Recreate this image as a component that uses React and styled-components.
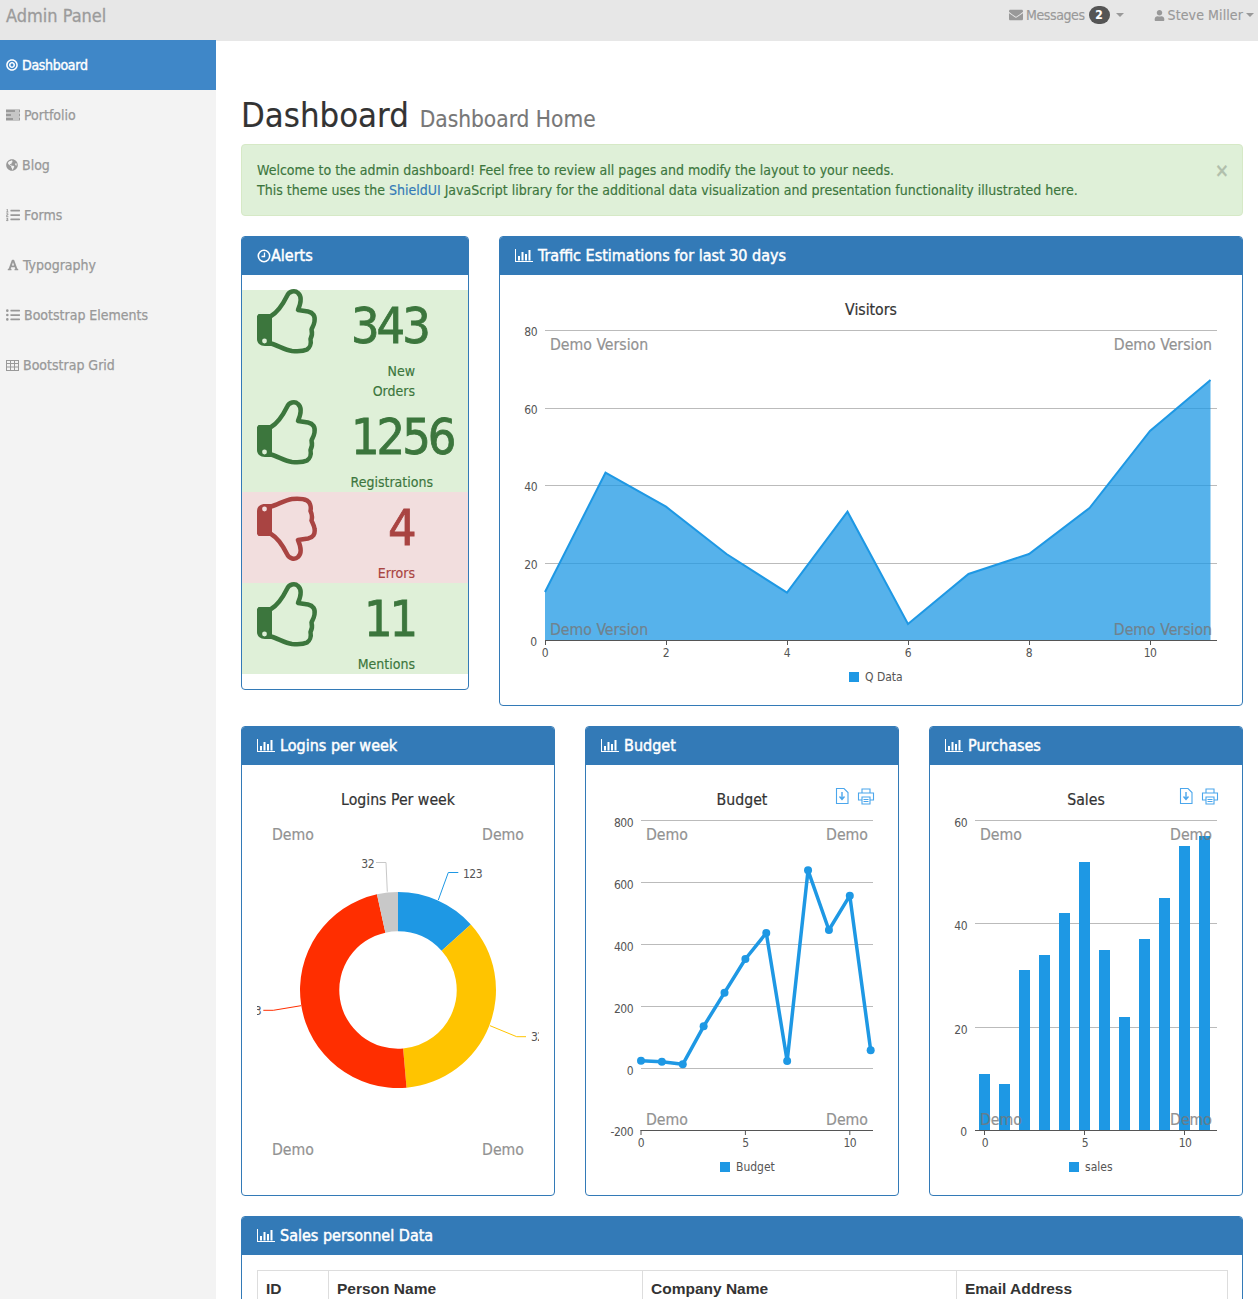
import React from "react";
import styled, { createGlobalStyle } from "styled-components";
import { FaEnvelope, FaUser, FaBullseye, FaGlobeAmericas, FaListOl, FaListUl, FaFont } from "react-icons/fa";

const UI = `"DejaVu Sans Condensed", "DejaVu Sans", sans-serif`;

const Global = createGlobalStyle`
  html, body { margin: 0; padding: 0; background: #fff; }
  body { font-family: ${UI}; font-stretch: condensed; font-size: 14px; line-height: 20px; color: #333; -webkit-text-stroke: .15px; }
  * { box-sizing: border-box; }
`;

const Page = styled.div`height: 1299px; overflow: hidden; display: flex; flex-direction: column;`;
const TopBar = styled.header`
  height: 41px; flex: none; background: #e7e7e7; display: flex; align-items: flex-start;
  justify-content: space-between; padding: 5px 4px 0 6px; color: #999;
`;
const Brand = styled.div`font-size: 18px; line-height: 22px; color: #9b9b9b; -webkit-text-stroke: .3px;`;
const TopRight = styled.div`display: flex; align-items: center; height: 20px;`;
const TopLink = styled.div`display: flex; align-items: center; gap: 3px; margin-left: ${p => p.$ml || 0}px;`;
const TopText = styled.span`letter-spacing: ${p => p.$ls}px;`;
const Badge = styled.span`
  display: inline-flex; align-items: center; justify-content: center; width: 21px; height: 18px;
  margin-left: 1px; border-radius: 10px; background: #555; color: #fff; font-size: 12px; font-weight: bold;
`;
const Caret = styled.span`
  display: inline-block; width: 0; height: 0; margin-left: ${p => p.$ml || 0}px;
  border-top: 4px solid #999; border-left: 4px solid transparent; border-right: 4px solid transparent;
`;
const Layout = styled.div`flex: 1; display: flex; min-height: 0;`;
const Sidebar = styled.nav`width: 216px; flex: none; margin-top: -1px; background: #f3f3f3; position: relative;`;
const SideItem = styled.a`
  display: flex; align-items: center; gap: 4px; height: 50px; padding-left: ${p => p.$pl || 6}px;
  color: ${p => (p.$active ? "#fff" : "#999")}; background: ${p => (p.$active ? "#3f87c8" : "transparent")};
  -webkit-text-stroke: ${p => (p.$active ? ".4px" : ".25px")};
  letter-spacing: ${p => (p.$active ? "-.3px" : "0")};
  font-size: 14px;
  svg { flex: none; }
`;
const Main = styled.main`flex: 1; min-width: 0; padding: 0 15px 0 25px;`;
const PageHeader = styled.h1`
  margin: 52px 0 6px; height: 45px; font-size: 34.400px; font-weight: normal; line-height: 45px; color: #333;
  small { font-size: 22.500px; color: #777; margin-left: 1px; }
`;
const Alert = styled.div`
  position: relative; height: 72px; padding: 15px; background: #dff0d8; border: 1px solid #d6e9c6;
  border-radius: 4px; color: #3c763d; margin-bottom: 20px;
  a { color: #337ab7; }
`;
const Close = styled.span`
  position: absolute; right: 13px; top: 15px; font-size: 19px; font-weight: bold; color: #000; opacity: .2;
`;
const Row = styled.div`display: grid; grid-template-columns: ${p => p.$cols}; gap: 30px; margin-bottom: 20px; align-items: start;`;
const Panel = styled.section`border: 1px solid #337ab7; border-radius: 4px; background: #fff; overflow: hidden;`;
const PanelHeading = styled.h3`
  margin: 0; height: 38px; background: #337ab7; color: #fff; padding: 0 15px; font-size: 16px; line-height: 20px;
  font-weight: normal; -webkit-text-stroke: .45px; display: flex; align-items: center; gap: ${p => p.$gap ?? 5}px;
`;
const PanelBody = styled.div`padding: 15px 0;`;
const ChartBody = styled.div`padding: 15px;`;
const AlertRowBox = styled.div`background: ${p => (p.$bad ? "#f2dede" : "#dff0d8")}; color: ${p => (p.$bad ? "#a94442" : "#3c763d")};`;
const AlertTop = styled.div`display: flex; height: 71px; padding-left: 15px;`;
const Thumb = styled.svg`flex: none; margin-top: ${p => (p.$down ? 4 : -1)}px; overflow: visible;`;
const BigNum = styled.div`
  font-size: 50px; line-height: 71px; margin: 1px 0 0 ${p => p.$ml}px; letter-spacing: -3px;
  white-space: nowrap; -webkit-text-stroke: .8px;
`;
const AlertLabel = styled.div`text-align: right; padding-right: ${p => p.$pr}px;`;
const HeadLabel = styled.span``;
const Table = styled.table`
  width: 100%; border-collapse: collapse; table-layout: fixed; font-family: "Liberation Sans", Arial, sans-serif;
  -webkit-text-stroke: 0;
  th { border: 1px solid #ddd; border-bottom-width: 2px; padding: 8px; text-align: left; font-size: 15.500px; line-height: 20px; color: #333; font-weight: bold; }
`;
const ChartSvg = styled.svg`display: block;`;
const ChartTitle = styled.text`font-size: 15.700px; fill: #333; stroke: #333; stroke-width: .2px; text-anchor: middle;`;
const Watermark = styled.text`font-size: 15.700px; fill: #777; stroke: #777; stroke-width: .2px; opacity: .8; text-anchor: ${p => p.$anchor || "start"};`;
const Tick = styled.text`font-size: 12px; fill: #555; text-anchor: ${p => p.$anchor || "middle"}; letter-spacing: ${p => (p.$tight ? "-.5px" : "0")};`;
const GridLine = styled.line`stroke: #bbb; stroke-width: 1;`;
const AxisLine = styled.line`stroke: #555; stroke-width: 1;`;

const BLUE = "#1e98e4";

function ThumbIcon({ down, color }) {
  return (
    <Thumb $down={down} width="60" height="65" viewBox="0 0 60 65">
      <g transform={down ? "translate(0 65) scale(1 -1)" : undefined}>
        <path d="M1.500 25H15V57H8C3 57 0 54 0 50V27Z" fill={color} />
        <circle cx="7.500" cy="52" r="2.400" fill={down ? "#f2dede" : "#dff0d8"} />
        <path
          d="M14 27C21 23 26 15 30 7C32 2 38 1 41 4C44.500 7 44 14 41 21L51 22.500C56 23.500 58.500 27 57.500 32.500C57 36 55.500 38 54.500 40.500C55.500 44 55 47 53.500 50C54.500 55 52.500 59 50 60.500C46 62.500 41 62.500 35 62C28 61 21 56.500 14 54.500"
          fill="none" stroke={color} strokeWidth="4.500" strokeLinecap="round" strokeLinejoin="round" />
      </g>
    </Thumb>
  );
}

function BarIcon() {
  return (
    <svg width="18" height="14" viewBox="0 0 18 14" fill="#fff">
      <rect x="0" y="0" width="1" height="13" />
      <rect x="0" y="12" width="18" height="1" />
      <rect x="3" y="7" width="2" height="4.500" />
      <rect x="6.500" y="3" width="2" height="8.500" />
      <rect x="10" y="5" width="2" height="6.500" />
      <rect x="13.500" y="1" width="2" height="10.500" />
    </svg>
  );
}
const ClockIcon = () => (
  <svg width="14" height="14" viewBox="0 0 14 14" fill="none" stroke="#fff" strokeWidth="1.600">
    <circle cx="7" cy="7" r="5.700" /><path d="M7.500 3.500V7.500H4.500" strokeWidth="1.300" />
  </svg>
);
const TasksIcon = () => (
  <svg width="14" height="12" viewBox="0 0 14 12" fill="#999">
    <rect y="0.500" width="14" height="3" /><rect y="4.500" width="14" height="3" /><rect y="8.500" width="14" height="3" />
    <rect x="9" y="1.500" width="4" height="1" fill="#f3f3f3" /><rect x="5" y="5.500" width="8" height="1" fill="#f3f3f3" /><rect x="7" y="9.500" width="6" height="1" fill="#f3f3f3" />
  </svg>
);
const TableIcon = () => (
  <svg width="13" height="11" viewBox="0 0 13 11" fill="none" stroke="#999" strokeWidth="1">
    <rect x=".5" y=".5" width="12" height="10" /><path d="M.5 3.500H12.500M.5 7H12.500M4.500 .5V10.500M8.500 .5V10.500" />
  </svg>
);
const ExportIcons = ({ x }) => (
  <g fill="none" stroke="#4ba6ec" strokeWidth="1.100">
    <path d={`M${x + .5} 788.500H${x + 8}L${x + 12} 792.500V803.500H${x + .5}Z`} />
    <path d={`M${x + 6} 792V799M${x + 3.500} 796.500L${x + 6} 799.500L${x + 8.500} 796.500`} strokeWidth="1.400" />
    <path d={`M${x + 26} 793V789H${x + 34}V793M${x + 26} 800H${x + 22.500}V793H${x + 37.500}V800H${x + 34}M${x + 26} 797H${x + 34}V804H${x + 26}Z`} />
    <path d={`M${x + 27.500} 799.500H${x + 32.500}M${x + 27.500} 801.500H${x + 32.500}`} />
  </g>
);

const Legend = ({ x, y, label }) => (
  <>
    <rect x={x} y={y} width="10" height="10" fill={BLUE} />
    <Tick x={x + 16} y={y + 8.500} $anchor="start">{label}</Tick>
  </>
);

const Traffic = () => {
  const ys = [592, 472.700, 506.700, 554, 592.700, 511.700, 624, 574, 554, 508, 431, 380];
  const pts = ys.map((y, i) => `${545 + 60.500 * i},${y}`).join(" ");
  return (
    <ChartSvg width="712" height="400" viewBox="515 290 712 400">
      <ChartTitle x="871" y="315">Visitors</ChartTitle>
      {[[330.500, "80"], [408.500, "60"], [485.500, "40"], [563.500, "20"]].map(([y, l]) => (
        <g key={l}><GridLine x1="545" x2="1217" y1={y} y2={y} /><Tick x="537" y={y + 5} $anchor="end" $tight>{l}</Tick></g>
      ))}
      <Tick x="537" y="646" $anchor="end">0</Tick>
      <polygon points={`545,640 ${pts} 1210.500,640`} fill={BLUE} fillOpacity=".75" />
      <polyline points={pts} fill="none" stroke={BLUE} strokeWidth="2" />
      <AxisLine x1="545" x2="1217" y1="640.500" y2="640.500" />
      {[0, 2, 4, 6, 8, 10].map((t) => (
        <g key={t}>
          <AxisLine x1={545 + 60.500 * t + .5} x2={545 + 60.500 * t + .5} y1="640" y2="645" />
          <Tick x={545 + 60.500 * t} y="657" $tight>{t}</Tick>
        </g>
      ))}
      <Watermark x="550" y="350">Demo Version</Watermark>
      <Watermark x="1212" y="350" $anchor="end">Demo Version</Watermark>
      <Watermark x="550" y="635">Demo Version</Watermark>
      <Watermark x="1212" y="635" $anchor="end">Demo Version</Watermark>
      <Legend x={849} y={672} label="Q Data" />
    </ChartSvg>
  );
};

function arc(cx, cy, R, r, a0, a1) {
  const p = (rad, deg) => {
    const t = (deg - 90) * Math.PI / 180;
    return `${(cx + rad * Math.cos(t)).toFixed(2)} ${(cy + rad * Math.sin(t)).toFixed(2)}`;
  };
  const large = a1 - a0 > 180 ? 1 : 0;
  return `M${p(R, a0)}A${R} ${R} 0 ${large} 1 ${p(R, a1)}L${p(r, a1)}A${r} ${r} 0 ${large} 0 ${p(r, a0)}Z`;
}

const Donut = () => (
  <ChartSvg width="282" height="400" viewBox="257 780 282 400">
    <ChartTitle x="398" y="805">Logins Per week</ChartTitle>
    <Watermark x="272" y="840">Demo</Watermark>
    <Watermark x="524" y="840" $anchor="end">Demo</Watermark>
    <Watermark x="272" y="1155">Demo</Watermark>
    <Watermark x="524" y="1155" $anchor="end">Demo</Watermark>
    <path d={arc(398, 990, 98, 58.700, 0, 48)} fill={BLUE} />
    <path d={arc(398, 990, 98, 58.700, 48, 175)} fill="#ffc400" />
    <path d={arc(398, 990, 98, 58.700, 175, 347.600)} fill="#ff2e00" />
    <path d={arc(398, 990, 98, 58.700, 347.600, 360)} fill="#c8c8c8" />
    <g fill="none" strokeWidth="1">
      <path d="M438.300 900L448.300 872.500H458.300" stroke={BLUE} />
      <path d="M490 1025.700L516.700 1036.700H526" stroke="#ffc400" />
      <path d="M301 1005.700L273.300 1010.300H263.300" stroke="#ff2e00" />
      <path d="M387.300 891.700L386 862.500H376" stroke="#c8c8c8" />
    </g>
    <Tick x="463" y="878" $anchor="start" $tight>123</Tick>
    <Tick x="531" y="1041" $anchor="start" $tight>321</Tick>
    <Tick x="261" y="1015" $anchor="end" $tight>423</Tick>
    <Tick x="374" y="868" $anchor="end" $tight>32</Tick>
  </ChartSvg>
);

const Budget = () => {
  const zy = [1007, 1010, 1018, 904, 803, 702, 624, 1008, 436, 615, 512, 976];
  const pts = zy.map((z, i) => [641 + 20.880 * i, z / 3 + 725]);
  return (
    <ChartSvg width="282" height="400" viewBox="601 780 282 400">
      <ChartTitle x="742" y="805">Budget</ChartTitle>
      <ExportIcons x={836} />
      {[[820.500, "800"], [882.500, "600"], [944.500, "400"], [1006.500, "200"], [1068.500, "0"]].map(([y, l]) => (
        <g key={l}><GridLine x1="641" x2="873" y1={y} y2={y} /><Tick x="633" y={y + 6} $anchor="end" $tight>{l}</Tick></g>
      ))}
      <Tick x="633" y="1136" $anchor="end" $tight>-200</Tick>
      <AxisLine x1="640.500" x2="873" y1="1130.500" y2="1130.500" />
      {[0, 5, 10].map((t) => (
        <g key={t}>
          <AxisLine x1={641 + 20.880 * t} x2={641 + 20.880 * t} y1="1130" y2="1135" />
          <Tick x={641 + 20.880 * t} y="1147" $tight>{t}</Tick>
        </g>
      ))}
      <Watermark x="646" y="840">Demo</Watermark>
      <Watermark x="868" y="840" $anchor="end">Demo</Watermark>
      <Watermark x="646" y="1125">Demo</Watermark>
      <Watermark x="868" y="1125" $anchor="end">Demo</Watermark>
      <polyline points={pts.map((p) => p.join(",")).join(" ")} fill="none" stroke={BLUE} strokeWidth="3.500" strokeLinejoin="round" />
      {pts.map(([x, y]) => <circle key={x} cx={x} cy={y} r="4" fill={BLUE} />)}
      <Legend x={720} y={1162} label="Budget" />
    </ChartSvg>
  );
};

const Sales = () => {
  const tops = [1047, 1077, 735, 690, 564, 411, 675, 876, 642, 519, 363, 333];
  return (
    <ChartSvg width="282" height="400" viewBox="945 780 282 400">
      <ChartTitle x="1086" y="805">Sales</ChartTitle>
      <ExportIcons x={1180} />
      {[[820.500, "60"], [923.500, "40"], [1027.500, "20"]].map(([y, l]) => (
        <g key={l}><GridLine x1="975" x2="1217" y1={y} y2={y} /><Tick x="967" y={y + 6} $anchor="end" $tight>{l}</Tick></g>
      ))}
      <Tick x="967" y="1136" $anchor="end">0</Tick>
      {tops.map((z, i) => <rect key={i} x={979 + 20 * i} y={z / 3 + 725} width="11" height={1130 - (z / 3 + 725)} fill={BLUE} />)}
      <AxisLine x1="975" x2="1217" y1="1130.500" y2="1130.500" />
      {[0, 5, 10].map((t) => (
        <g key={t}>
          <AxisLine x1={984.500 + 20 * t} x2={984.500 + 20 * t} y1="1130" y2="1135" />
          <Tick x={985 + 20 * t} y="1147" $tight>{t}</Tick>
        </g>
      ))}
      <Watermark x="980" y="840">Demo</Watermark>
      <Watermark x="1212" y="840" $anchor="end">Demo</Watermark>
      <Watermark x="980" y="1125">Demo</Watermark>
      <Watermark x="1212" y="1125" $anchor="end">Demo</Watermark>
      <Legend x={1069} y={1162} label="sales" />
    </ChartSvg>
  );
};

const alerts = [
  { n: "343", ml: 34, pr: 53, label: <>New<br />Orders</> },
  { n: "1256", ml: 34, pr: 35, label: "Registrations" },
  { n: "4", ml: 71, pr: 53, label: "Errors", bad: true },
  { n: "11", ml: 47, pr: 53, label: "Mentions" },
];

export default function App() {
  return (
    <Page>
      <Global />
      <TopBar>
        <Brand>Admin Panel</Brand>
        <TopRight>
          <TopLink><FaEnvelope size={14} /><TopText $ls={-0.4}>Messages</TopText><Badge>2</Badge><Caret $ml={3} /></TopLink>
          <TopLink $ml={30}><FaUser size={11} /><TopText $ls={0.1}>Steve Miller</TopText><Caret /></TopLink>
        </TopRight>
      </TopBar>
      <Layout>
        <Sidebar>
          <SideItem $active><FaBullseye size={12} />Dashboard</SideItem>
          <SideItem><TasksIcon />Portfolio</SideItem>
          <SideItem><FaGlobeAmericas size={12} />Blog</SideItem>
          <SideItem><FaListOl size={14} />Forms</SideItem>
          <SideItem $pl={7}><FaFont size={12} />Typography</SideItem>
          <SideItem><FaListUl size={14} />Bootstrap Elements</SideItem>
          <SideItem><TableIcon />Bootstrap Grid</SideItem>
        </Sidebar>
        <Main>
          <PageHeader>Dashboard <small>Dashboard Home</small></PageHeader>
          <Alert>
            <Close>×</Close>
            Welcome to the admin dashboard! Feel free to review all pages and modify the layout to your needs.<br />
            This theme uses the <a>ShieldUI</a> JavaScript library for the additional data visualization and presentation functionality illustrated here.
          </Alert>
          <Row $cols="228px 744px">
            <Panel>
              <PanelHeading $gap={0}><ClockIcon /><HeadLabel>Alerts</HeadLabel></PanelHeading>
              <PanelBody>
                {alerts.map((a) => (
                  <AlertRowBox key={a.n} $bad={a.bad}>
                    <AlertTop>
                      <ThumbIcon down={a.bad} color={a.bad ? "#a94442" : "#3c763d"} />
                      <BigNum $ml={a.ml}>{a.n}</BigNum>
                    </AlertTop>
                    <AlertLabel $pr={a.pr}>{a.label}</AlertLabel>
                  </AlertRowBox>
                ))}
              </PanelBody>
            </Panel>
            <Panel>
              <PanelHeading><BarIcon /><HeadLabel>Traffic Estimations for last 30 days</HeadLabel></PanelHeading>
              <ChartBody><Traffic /></ChartBody>
            </Panel>
          </Row>
          <Row $cols="314px 314px 314px">
            <Panel>
              <PanelHeading><BarIcon /><HeadLabel>Logins per week</HeadLabel></PanelHeading>
              <ChartBody><Donut /></ChartBody>
            </Panel>
            <Panel>
              <PanelHeading><BarIcon /><HeadLabel>Budget</HeadLabel></PanelHeading>
              <ChartBody><Budget /></ChartBody>
            </Panel>
            <Panel>
              <PanelHeading><BarIcon /><HeadLabel>Purchases</HeadLabel></PanelHeading>
              <ChartBody><Sales /></ChartBody>
            </Panel>
          </Row>
          <Panel>
            <PanelHeading><BarIcon /><HeadLabel>Sales personnel Data</HeadLabel></PanelHeading>
            <ChartBody>
              <Table>
                <colgroup><col width="71" /><col width="314" /><col width="314" /><col width="271" /></colgroup>
                <thead><tr><th>ID</th><th>Person Name</th><th>Company Name</th><th>Email Address</th></tr></thead>
              </Table>
            </ChartBody>
          </Panel>
        </Main>
      </Layout>
    </Page>
  );
}
